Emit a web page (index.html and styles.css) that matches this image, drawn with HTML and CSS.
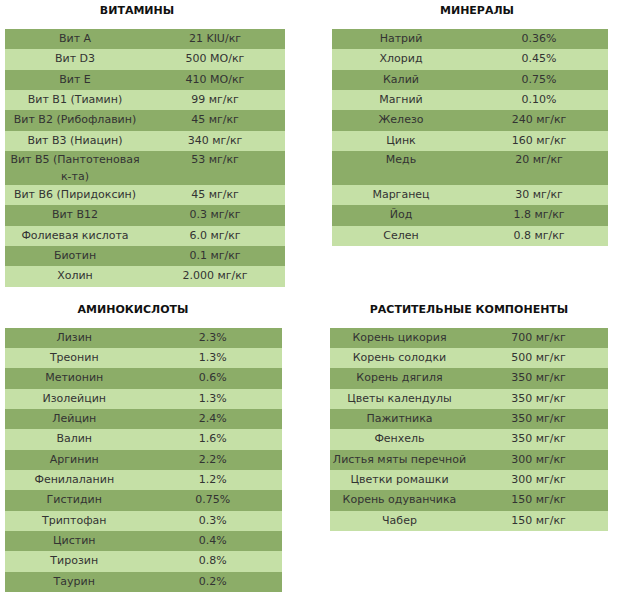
FILE: index.html
```html
<!DOCTYPE html>
<html lang="ru">
<head>
<meta charset="utf-8">
<title>Состав</title>
<link rel="stylesheet" href="styles.css">
</head>
<body>
<div class="page">
  <div class="pair pair-top">
    <section class="block block-vit">
      <h2 class="title title-vit">ВИТАМИНЫ</h2>
      <table class="grid">
        <tr><td>Вит A</td><td>21 KIU/кг</td></tr>
        <tr><td>Вит D3</td><td>500 МО/кг</td></tr>
        <tr><td>Вит E</td><td>410 МО/кг</td></tr>
        <tr><td>Вит B1 (Тиамин)</td><td>99 мг/кг</td></tr>
        <tr><td>Вит B2 (Рибофлавин)</td><td>45 мг/кг</td></tr>
        <tr><td>Вит B3 (Ниацин)</td><td>340 мг/кг</td></tr>
        <tr class="tall"><td class="wrap">Вит B5 (Пантотеновая <span class="nb">к-та)</span></td><td>53 мг/кг</td></tr>
        <tr><td>Вит B6 (Пиридоксин)</td><td>45 мг/кг</td></tr>
        <tr><td>Вит B12</td><td>0.3 мг/кг</td></tr>
        <tr><td>Фолиевая кислота</td><td>6.0 мг/кг</td></tr>
        <tr><td>Биотин</td><td>0.1 мг/кг</td></tr>
        <tr><td>Холин</td><td>2.000 мг/кг</td></tr>
      </table>
    </section>
    <section class="block block-min">
      <h2 class="title title-min">МИНЕРАЛЫ</h2>
      <table class="grid">
        <tr><td>Натрий</td><td>0.36%</td></tr>
        <tr><td>Хлорид</td><td>0.45%</td></tr>
        <tr><td>Калий</td><td>0.75%</td></tr>
        <tr><td>Магний</td><td>0.10%</td></tr>
        <tr><td>Железо</td><td>240 мг/кг</td></tr>
        <tr><td>Цинк</td><td>160 мг/кг</td></tr>
        <tr class="tall"><td>Медь</td><td>20 мг/кг</td></tr>
        <tr><td>Марганец</td><td>30 мг/кг</td></tr>
        <tr><td>Йод</td><td>1.8 мг/кг</td></tr>
        <tr><td>Селен</td><td>0.8 мг/кг</td></tr>
      </table>
    </section>
  </div>
  <div class="pair pair-bottom">
    <section class="block block-amino">
      <h2 class="title title-amino">АМИНОКИСЛОТЫ</h2>
      <table class="grid">
        <tr><td>Лизин</td><td>2.3%</td></tr>
        <tr><td>Треонин</td><td>1.3%</td></tr>
        <tr><td>Метионин</td><td>0.6%</td></tr>
        <tr><td>Изолейцин</td><td>1.3%</td></tr>
        <tr><td>Лейцин</td><td>2.4%</td></tr>
        <tr><td>Валин</td><td>1.6%</td></tr>
        <tr><td>Аргинин</td><td>2.2%</td></tr>
        <tr><td>Фенилаланин</td><td>1.2%</td></tr>
        <tr><td>Гистидин</td><td>0.75%</td></tr>
        <tr><td>Триптофан</td><td>0.3%</td></tr>
        <tr><td>Цистин</td><td>0.4%</td></tr>
        <tr><td>Тирозин</td><td>0.8%</td></tr>
        <tr><td>Таурин</td><td>0.2%</td></tr>
      </table>
    </section>
    <section class="block block-plant">
      <h2 class="title title-plant">РАСТИТЕЛЬНЫЕ КОМПОНЕНТЫ</h2>
      <table class="grid">
        <tr><td>Корень цикория</td><td>700 мг/кг</td></tr>
        <tr><td>Корень солодки</td><td>500 мг/кг</td></tr>
        <tr><td>Корень дягиля</td><td>350 мг/кг</td></tr>
        <tr><td>Цветы календулы</td><td>350 мг/кг</td></tr>
        <tr><td>Пажитника</td><td>350 мг/кг</td></tr>
        <tr><td>Фенхель</td><td>350 мг/кг</td></tr>
        <tr><td>Листья мяты перечной</td><td>300 мг/кг</td></tr>
        <tr><td>Цветки ромашки</td><td>300 мг/кг</td></tr>
        <tr><td>Корень одуванчика</td><td>150 мг/кг</td></tr>
        <tr><td>Чабер</td><td>150 мг/кг</td></tr>
      </table>
    </section>
  </div>
</div>
</body>
</html>
```

FILE: styles.css
```css
* { box-sizing: border-box; }

html, body {
  margin: 0;
  padding: 0;
  background: #ffffff;
}

body {
  font-family: "DejaVu Sans", Verdana, sans-serif;
  font-size: 11px;
  color: #333333;
}

.page {
  padding: 0 0 0 5px;
}

.pair {
  display: flex;
  align-items: flex-start;
}

.pair-top {
  gap: 47px;
}

.pair-bottom {
  gap: 48px;
  margin-top: 12px;
}

.block-vit { width: 280px; }
.block-min { width: 276px; }
.block-amino { width: 277px; }
.block-plant { width: 278px; }

.title {
  margin: 2px 0 9px;
  height: 18px;
  line-height: 18px;
  font-size: 11px;
  font-weight: bold;
  color: #111111;
  text-align: center;
  white-space: nowrap;
}

.title-vit { padding-right: 16px; }
.title-min { padding-left: 14px; }
.title-amino { padding-right: 21px; }

.grid {
  width: 100%;
  border-collapse: collapse;
  border-spacing: 0;
  table-layout: fixed;
}

.grid td {
  width: 50%;
  padding: 1px 2px;
  line-height: 18.33px;
  text-align: center;
  vertical-align: top;
  white-space: nowrap;
  color: #333333;
}

.grid td.wrap {
  white-space: normal;
}

.nb { white-space: nowrap; }

.grid tr:nth-child(odd) td { background: #8cad68; }
.grid tr:nth-child(even) td { background: #c5e0a6; }

.grid tr.tall td {
  height: 34px;
  padding: 0 2px;
  line-height: 17px;
}
```
